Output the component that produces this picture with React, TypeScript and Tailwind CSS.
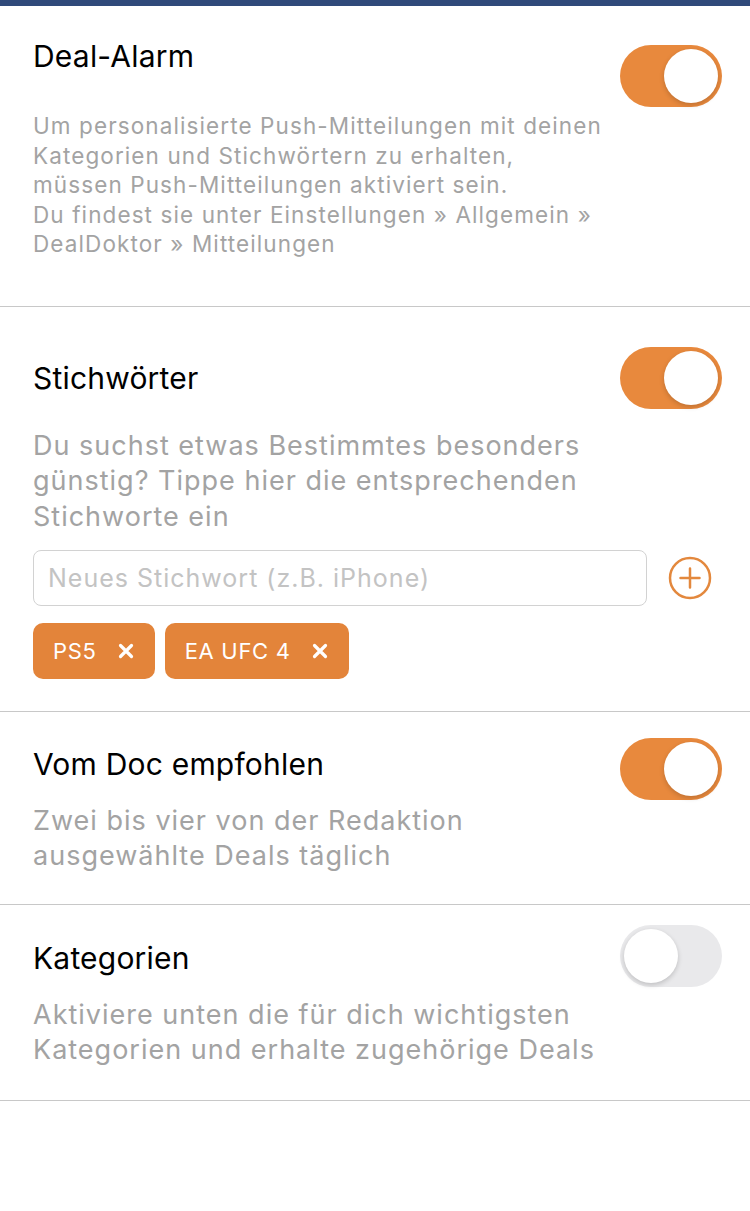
import { useState } from "react";

function Toggle({ on, onChange }: { on: boolean; onChange: () => void }) {
  return (
    <button
      type="button"
      onClick={onChange}
      className={`relative h-[62px] w-[102px] shrink-0 rounded-full transition-colors ${
        on ? "bg-[#e8893d]" : "bg-[#e9e9eb]"
      }`}
    >
      <span
        className={`absolute top-[4px] h-[54px] w-[54px] rounded-full bg-white shadow-[0_2px_5px_rgba(0,0,0,0.18)] transition-all ${
          on ? "left-[44px]" : "left-[4px]"
        }`}
      />
    </button>
  );
}

function PlusIcon() {
  return (
    <svg width="44" height="44" viewBox="0 0 44 44" fill="none" stroke="#e3883d" strokeWidth={2.5} strokeLinecap="round">
      <circle cx="22" cy="22" r="20" />
      <path d="M22 12.5v19M12.5 22h19" />
    </svg>
  );
}

function Chip({ label }: { label: string }) {
  return (
    <div className="flex h-[56px] items-center gap-[21px] rounded-[10px] bg-[#e3843a] pl-[20px] pr-[21px] text-[22px] tracking-[0.7px] text-white">
      <span>{label}</span>
      <svg width="16" height="16" viewBox="0 0 16 16" stroke="white" strokeWidth={3.2} strokeLinecap="round">
        <path d="M2.5 2.5l11 11M13.5 2.5l-11 11" />
      </svg>
    </div>
  );
}

export default function App() {
  const [dealAlarm, setDealAlarm] = useState(true);
  const [keywords, setKeywords] = useState(true);
  const [recommended, setRecommended] = useState(true);
  const [categories, setCategories] = useState(false);
  const [tags, setTags] = useState(["PS5", "EA UFC 4"]);

  return (
    <div className="min-h-[1211px] w-[750px] bg-white font-['Inter',sans-serif] text-black">
      <div className="h-[6px] bg-[#304a7a]" />

      {/* Deal-Alarm */}
      <section className="flex border-b border-[#c8c8c8] pl-[33px] pr-[28px] pt-[32px] pb-[47px]">
        <div className="flex-1">
          <h2 className="text-[30px] leading-[36px] tracking-[0.2px]">Deal-Alarm</h2>
          <p className="mt-[37px] text-[22.5px] leading-[29.5px] tracking-[1.1px] whitespace-nowrap text-[#a3a3a3]">
            Um personalisierte Push-Mitteilungen mit deinen
            <br />
            Kategorien und Stichwörtern zu erhalten,
            <br />
            müssen Push-Mitteilungen aktiviert sein.
            <br />
            Du findest sie unter Einstellungen » Allgemein »
            <br />
            DealDoktor » Mitteilungen
          </p>
        </div>
        <div className="mt-[7px]">
          <Toggle on={dealAlarm} onChange={() => setDealAlarm((v) => !v)} />
        </div>
      </section>

      {/* Stichwörter */}
      <section className="border-b border-[#c8c8c8] pl-[33px] pr-[28px] pt-[40px] pb-[32px]">
        <div className="flex items-center justify-between">
          <h2 className="text-[30px] leading-[36px] tracking-[0.2px]">Stichwörter</h2>
          <Toggle on={keywords} onChange={() => setKeywords((v) => !v)} />
        </div>
        <p className="mt-[19px] text-[27px] leading-[35.5px] tracking-[1px] whitespace-nowrap text-[#a3a3a3]">
          Du suchst etwas Bestimmtes besonders
          <br />
          günstig? Tippe hier die entsprechenden
          <br />
          Stichworte ein
        </p>
        <div className="mt-[16px] flex items-center">
          <input
            type="text"
            placeholder="Neues Stichwort (z.B. iPhone)"
            className="h-[56px] w-[614px] rounded-[8px] border border-[#d2d2d2] px-[14px] text-[25px] tracking-[1px] placeholder:text-[#c3c3c3] outline-none"
          />
          <div className="ml-[21px]">
            <PlusIcon />
          </div>
        </div>
        <div className="mt-[17px] flex gap-[10px]">
          {tags.map((t) => (
            <div key={t} onClick={() => setTags((prev) => prev.filter((x) => x !== t))}>
              <Chip label={t} />
            </div>
          ))}
        </div>
      </section>

      {/* Vom Doc empfohlen */}
      <section className="border-b border-[#c8c8c8] pl-[33px] pr-[28px] pt-[26px] pb-[31px]">
        <div className="flex items-center justify-between">
          <h2 className="-mt-[10px] text-[30px] leading-[36px] tracking-[0.2px]">Vom Doc empfohlen</h2>
          <Toggle on={recommended} onChange={() => setRecommended((v) => !v)} />
        </div>
        <p className="mt-[3px] text-[27px] leading-[35px] tracking-[1px] whitespace-nowrap text-[#a3a3a3]">
          Zwei bis vier von der Redaktion
          <br />
          ausgewählte Deals täglich
        </p>
      </section>

      {/* Kategorien */}
      <section className="border-b border-[#c8c8c8] pl-[33px] pr-[28px] pt-[20px] pb-[33px]">
        <div className="flex items-center justify-between">
          <h2 className="mt-[4px] text-[30px] leading-[36px] tracking-[0.2px]">Kategorien</h2>
          <Toggle on={categories} onChange={() => setCategories((v) => !v)} />
        </div>
        <p className="mt-[10px] text-[27px] leading-[35px] tracking-[1px] whitespace-nowrap text-[#a3a3a3]">
          Aktiviere unten die für dich wichtigsten
          <br />
          Kategorien und erhalte zugehörige Deals
        </p>
      </section>
    </div>
  );
}
